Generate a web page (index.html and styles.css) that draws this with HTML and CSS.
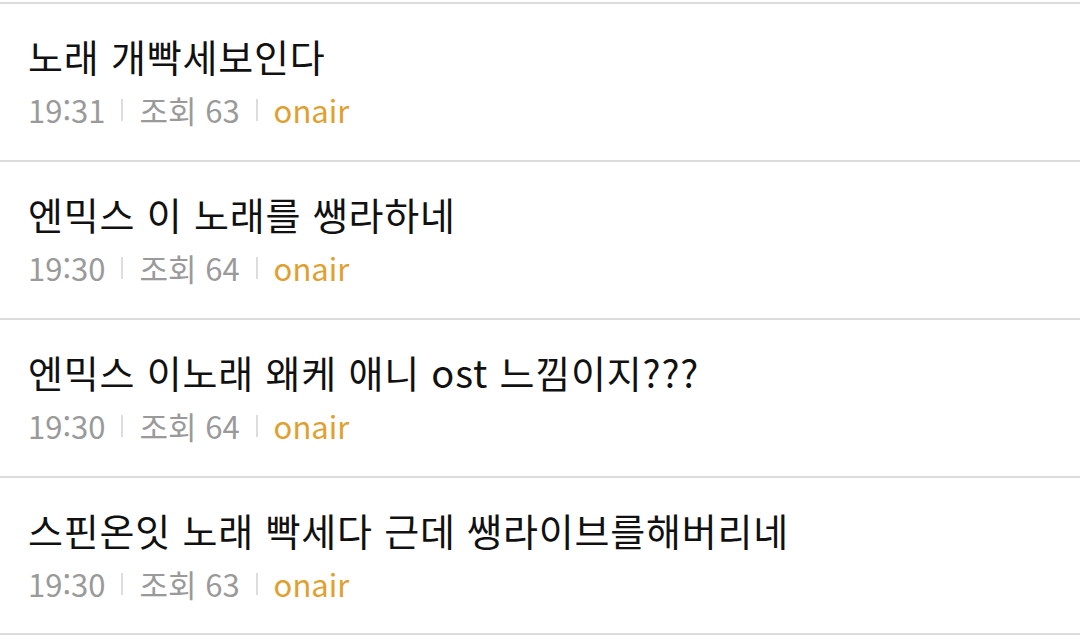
FILE: index.html
```html
<!DOCTYPE html>
<html lang="ko">
<head>
<meta charset="utf-8">
<link rel="stylesheet" href="styles.css">
</head>
<body>
<ul class="list">
  <li class="item">
    <div class="title">노래 개빡세보인다</div>
    <div class="meta"><span class="time">19:31</span><span class="sep"></span><span>조회 63</span><span class="sep"></span><span class="board">onair</span></div>
  </li>
  <li class="item">
    <div class="title">엔믹스 이 노래를 쌩라하네</div>
    <div class="meta"><span class="time">19:30</span><span class="sep"></span><span>조회 64</span><span class="sep"></span><span class="board">onair</span></div>
  </li>
  <li class="item">
    <div class="title">엔믹스 이노래 왜케 애니 ost 느낌이지???</div>
    <div class="meta"><span class="time">19:30</span><span class="sep"></span><span>조회 64</span><span class="sep"></span><span class="board">onair</span></div>
  </li>
  <li class="item">
    <div class="title">스핀온잇 노래 빡세다 근데 쌩라이브를해버리네</div>
    <div class="meta"><span class="time">19:30</span><span class="sep"></span><span>조회 63</span><span class="sep"></span><span class="board">onair</span></div>
  </li>
</ul>
</body>
</html>
```
FILE: styles.css
```css
html, body {
  margin: 0;
  padding: 0;
  background: #ffffff;
}
body {
  font-family: "Noto Sans CJK KR", "Noto Sans", sans-serif;
  color: #111;
}
.list {
  list-style: none;
  margin: 0;
  padding: 2px 0 0 0;
}
.item {
  border-top: 2px solid #dcdcdc;
  height: 156px;
  padding: 0 28px;
  display: flex;
  flex-direction: column;
}
.item:last-child {
  border-bottom: 2px solid #dcdcdc;
  height: 155px;
}
.title {
  font-size: 38px;
  line-height: 44px;
  margin-top: 30px;
  letter-spacing: 0.8px;
  color: #111;
}
.meta {
  margin-top: 14px;
  display: flex;
  align-items: center;
  font-size: 31px;
  line-height: 36px;
  color: #9a9a9a;
}
.sep {
  width: 2px;
  height: 22px;
  background: #dddddd;
  margin: 0 16px;
}
.board {
  color: #e0a030;
}
```
